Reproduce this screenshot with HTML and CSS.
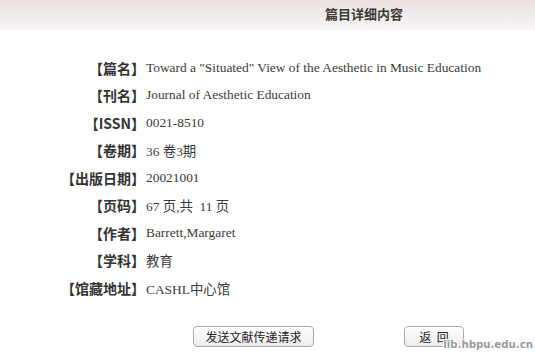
FILE: index.html
```html
<!DOCTYPE html>
<html lang="zh-CN">
<head>
  <meta charset="UTF-8">
  <title>篇目详细内容</title>
  <link rel="stylesheet" href="styles.css">
</head>
<body>

  <div class="title-bar">篇目详细内容</div>

  <table class="detail">
    <tr><th>【篇名】</th><td>Toward a "Situated" View of the Aesthetic in Music Education</td></tr>
    <tr><th>【刊名】</th><td>Journal of Aesthetic Education</td></tr>
    <tr><th>【ISSN】</th><td>0021-8510</td></tr>
    <tr><th>【卷期】</th><td>36 卷3期</td></tr>
    <tr><th>【出版日期】</th><td>20021001</td></tr>
    <tr><th>【页码】</th><td>67 页,共&nbsp; 11 页</td></tr>
    <tr><th>【作者】</th><td>Barrett,Margaret</td></tr>
    <tr><th>【学科】</th><td>教育</td></tr>
    <tr><th>【馆藏地址】</th><td>CASHL中心馆</td></tr>
  </table>

  <div class="actions">
    <button class="btn btn-send">发送文献传递请求</button>
    <button class="btn btn-back">返&nbsp; 回</button>
  </div>

  <div class="watermark">lib.hbpu.edu.cn</div>

</body>
</html>
```

FILE: styles.css
```css
body {
  margin: 0;
  padding: 0;
  background: #fff;
  font-family: "Liberation Serif", "Noto Sans CJK SC", serif;
  font-size: 13.4px;
  color: #333;
  width: 535px;
  height: 353px;
  position: relative;
  overflow: hidden;
}

.title-bar {
  height: 30px;
  line-height: 27px;
  padding-left: 325px;
  background: linear-gradient(#ebe2e2, #f8f4f4);
  font-family: "Noto Sans CJK SC", sans-serif;
  font-weight: bold;
  font-size: 13px;
  color: #3a3a3a;
}

.detail {
  border-collapse: collapse;
  margin-top: 24px;
}

.detail th,
.detail td {
  height: 27.5px;
  padding: 0;
  vertical-align: middle;
}

.detail th {
  width: 145px;
  text-align: right;
  font-family: "Noto Sans CJK SC", sans-serif;
  font-weight: bold;
  font-size: 14px;
  color: #333;
  white-space: nowrap;
}

.detail td {
  padding-left: 1px;
  white-space: nowrap;
  color: #3a3a3a;
}

.actions {
  display: flex;
  margin-top: 24px;
}

.btn {
  height: 21px;
  padding: 0;
  border: 1px solid #a9a9a9;
  border-radius: 4px;
  background: linear-gradient(#ffffff, #ececec);
  font-family: "Noto Sans CJK SC", sans-serif;
  font-size: 12px;
  color: #222;
  line-height: 19px;
}

.btn-send {
  width: 121px;
  margin-left: 193px;
}

.btn-back {
  width: 60px;
  margin-left: 90px;
}

.watermark {
  position: absolute;
  right: 2px;
  bottom: 3px;
  font-family: "DejaVu Sans", sans-serif;
  font-weight: bold;
  font-size: 10.2px;
  color: #9a9a9a;
  text-shadow: 1px 1px 0 #fff, -1px -1px 0 #fff, 1px -1px 0 #fff, -1px 1px 0 #fff;
}
```
